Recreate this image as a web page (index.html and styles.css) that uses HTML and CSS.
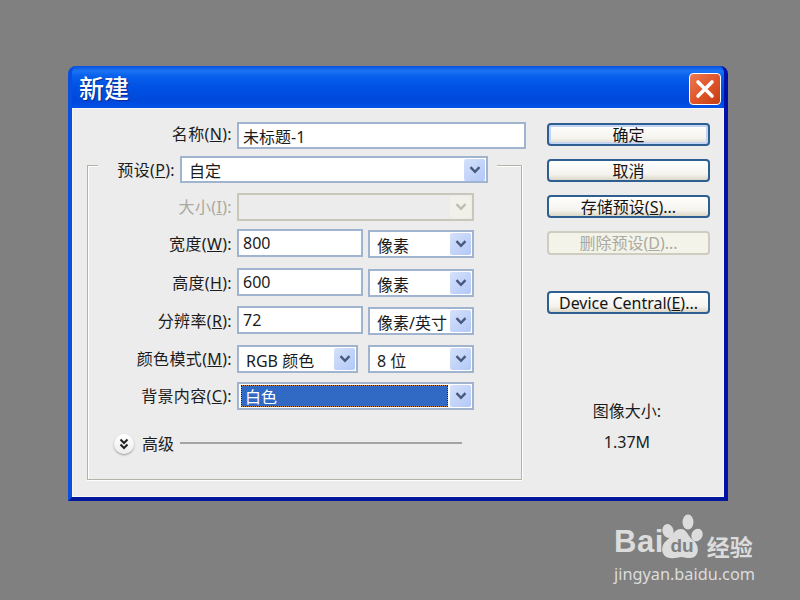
FILE: index.html
```html
<!DOCTYPE html>
<html lang="zh-CN">
<head>
<meta charset="utf-8">
<title>新建</title>
<link rel="stylesheet" href="styles.css">
</head>
<body>
<svg class="defs" width="0" height="0" aria-hidden="true"><defs>
  <symbol id="chev" viewBox="0 0 12 8"><path d="M1.5 1.2 6 5.8l4.5-4.6" fill="none" stroke="currentColor" stroke-width="2.4"/></symbol>
</defs></svg>
<main class="dialog">
  <header class="titlebar">
    <h1 class="title">新建</h1>
    <button class="close" aria-label="关闭"><svg viewBox="0 0 20 20" width="20" height="20"><path d="M3 3l14 14M17 3 3 17" stroke="#fff" stroke-width="3.6" stroke-linecap="round"/></svg></button>
  </header>
  <div class="client">
    <form class="form">
      <div class="row name-row">
        <label class="label">名称(<u>N</u>):</label>
        <div class="field input wide">未标题-1</div>
      </div>
      <div class="preset-row">
        <label class="label">预设(<u>P</u>):</label>
        <div class="field select preset"><span class="val">自定</span><span class="arrow"><svg width="12" height="8"><use href="#chev"/></svg></span></div>
      </div>
      <section class="group">
        <div class="rows">
          <div class="row disabled">
            <label class="label">大小(<u>I</u>):</label>
            <div class="field select full"><span class="val"></span><span class="arrow"><svg width="12" height="8"><use href="#chev"/></svg></span></div>
          </div>
          <div class="row">
            <label class="label">宽度(<u>W</u>):</label>
            <div class="field input num">800</div>
            <div class="field select unit"><span class="val">像素</span><span class="arrow"><svg width="12" height="8"><use href="#chev"/></svg></span></div>
          </div>
          <div class="row">
            <label class="label">高度(<u>H</u>):</label>
            <div class="field input num">600</div>
            <div class="field select unit"><span class="val">像素</span><span class="arrow"><svg width="12" height="8"><use href="#chev"/></svg></span></div>
          </div>
          <div class="row">
            <label class="label">分辨率(<u>R</u>):</label>
            <div class="field input num">72</div>
            <div class="field select unit"><span class="val">像素/英寸</span><span class="arrow"><svg width="12" height="8"><use href="#chev"/></svg></span></div>
          </div>
          <div class="row">
            <label class="label">颜色模式(<u>M</u>):</label>
            <div class="field select mode"><span class="val">RGB 颜色</span><span class="arrow"><svg width="12" height="8"><use href="#chev"/></svg></span></div>
            <div class="field select unit depth"><span class="val">8 位</span><span class="arrow"><svg width="12" height="8"><use href="#chev"/></svg></span></div>
          </div>
          <div class="row">
            <label class="label">背景内容(<u>C</u>):</label>
            <div class="field select full focused"><span class="val">白色</span><span class="arrow"><svg width="12" height="8"><use href="#chev"/></svg></span></div>
          </div>
        </div>
        <div class="advanced">
          <span class="disc"><svg viewBox="0 0 12 12" width="12" height="12"><path d="M2.5 1.5 6 5l3.5-3.5M2.5 6.5 6 10l3.5-3.5" fill="none" stroke="#222" stroke-width="2"/></svg></span>
          <span class="adv-label">高级</span>
          <span class="adv-line"></span>
        </div>
      </section>
    </form>
    <aside class="side">
      <button class="btn default">确定</button>
      <button class="btn">取消</button>
      <button class="btn">存储预设(<u>S</u>)...</button>
      <button class="btn off">删除预设(<u>D</u>)...</button>
      <button class="btn central">Device Central(<u>E</u>)...</button>
      <p class="info info-head">图像大小:</p>
      <p class="info info-size">1.37M</p>
    </aside>
  </div>
</main>
<div class="mark">
  <div class="mark-logo">
    <span class="mark-bai">Bai</span>
    <svg class="mark-paw" viewBox="0 0 46 50" width="46" height="50">
      <ellipse cx="8" cy="17" rx="5.5" ry="7" transform="rotate(-15 8 17)"/>
      <ellipse cx="28" cy="8" rx="5.5" ry="7.5"/>
      <ellipse cx="37" cy="21" rx="5.5" ry="6.5" transform="rotate(25 37 21)"/>
      <path d="M21 15c6 0 7 8 13 12 6 5 5 16-3 17-4 .5-7-1-10-1s-6 2-11 1c-9-1-10-12-4-17 6-4 8-12 15-12z"/>
      <text x="22" y="38" class="mark-du">du</text>
    </svg>
    <span class="mark-jy">经验</span>
  </div>
  <div class="mark-url">jingyan.baidu.com</div>
</div>
</body>
</html>
```
FILE: styles.css
```css
* { box-sizing: border-box; }
html, body { margin: 0; padding: 0; }
body {
  width: 800px;
  height: 600px;
  overflow: hidden;
  position: relative;
  background: #808080;
  padding: 66px 0 0 68px;
  font-family: "Noto Sans", "Noto Sans CJK SC", sans-serif;
  font-size: 16px;
  color: #1c1c1c;
}
.defs { position: absolute; }
u { text-underline-offset: 1px; }

.dialog {
  width: 660px;
  background: #0a52e0;
  border-radius: 8px 8px 0 0;
  border-style: solid;
  border-width: 0 4px 4px 4px;
  border-color: #0a4fe0 #0010a8 #00189c #0a4ee0;
}
.titlebar {
  height: 42px;
  display: flex;
  align-items: flex-start;
  justify-content: space-between;
  padding: 7px 3px 0 7px;
  border-radius: 7px 7px 0 0;
  background: linear-gradient(#0a50dc 0, #1b74f4 5px, #0860ec 10px, #0052e4 21px, #0048dc 35px, #0252e8 42px);
}
.title {
  margin: -2px 0 0;
  color: #fff;
  font-family: "Noto Sans CJK SC", sans-serif;
  font-size: 25px;
  font-weight: 500;
  line-height: 32px;
  text-shadow: 1px 1px 1px #0a2a90;
}
.close {
  width: 32px;
  height: 32px;
  padding: 0;
  display: flex;
  align-items: center;
  justify-content: center;
  border: 1px solid #fff;
  border-radius: 4px;
  background: linear-gradient(135deg, #ec7a50, #e0562a 50%, #c23e14);
}

.client {
  display: flex;
  align-items: flex-start;
  background: #ececec;
  border: 1px solid #f6f6f6;
  padding: 13px 0 16px 14px;
}
.form { width: 439px; display: flex; flex-direction: column; }
.side { width: 163px; margin-left: 21px; display: flex; flex-direction: column; }

.row { display: flex; align-items: flex-start; gap: 5px; height: 28px; }
.label { flex: none; text-align: right; line-height: 29px; white-space: nowrap; letter-spacing: .35px; }
.name-row .label { width: 145px; margin-right: 0; line-height: 25px; }
.preset-row {
  position: relative;
  z-index: 1;
  display: flex;
  align-items: flex-start;
  gap: 5px;
  height: 27px;
  width: 399px;
  margin: 6px 0 -18px 11px;
  padding-right: 9px;
  background: #ececec;
}
.preset-row .label { width: 77px; line-height: 28px; }

.field { flex: none; height: 28px; display: flex; align-items: center; }
.input {
  background: #fff;
  border: 2px solid #a0b4cf;
  padding: 0 4px;
  margin-top: -1px;
}
.wide { width: 289px; height: 27px; margin-top: 0; }
.num { width: 126px; padding-left: 4px; }
.select {
  background: #fff;
  border: 2px solid #a0b4cf;
  justify-content: space-between;
  padding: 1px;
}
.val { flex: 1; padding-left: 6px; padding-top: 1px; white-space: nowrap; overflow: hidden; }
.arrow {
  flex: none;
  width: 21px;
  height: 22px;
  display: flex;
  align-items: center;
  justify-content: center;
  color: #47597e;
  border-radius: 2px;
  background: linear-gradient(135deg, #d5e1fb, #b2c8f7);
}
.preset { width: 308px; height: 27px; }
.full { width: 237px; }
.unit { width: 106px; }
.mode { width: 121px; }
.depth { margin-left: 5px; }

.disabled .label { color: #a9a99f; }
.disabled .select { background: #ececec; border-color: #c9c7ba; }
.disabled .arrow { color: #bdbdb2; background: #f1f1ea; }

.focused .val {
  height: 22px;
  line-height: 23px;
  margin: 0 2px 0 1px;
  padding: 0 0 0 3px;
  background: #316ac5;
  color: #fff;
  border: 1px solid #c98a2a;
  outline: 1px dotted #2a1c00;
  outline-offset: -1px;
}

.group {
  width: 435px;
  margin: 0;
  padding: 27px 0 25px 0;
  border: 1px solid #b5b3a6;
  box-shadow: inset 1px 1px 0 #fff, 0 1px 0 #fff, 1px 0 0 #fff;
}
.rows { display: grid; grid-template-rows: 37px 39px 38px 38px 37px 28px; padding-left: 1px; }
.rows .label { width: 143px; margin-right: 0; }
.advanced {
  display: flex;
  align-items: center;
  height: 20px;
  margin-top: 24px;
  padding-left: 26px;
}
.disc {
  width: 20px;
  height: 20px;
  display: flex;
  align-items: center;
  justify-content: center;
  border-radius: 50%;
  background: linear-gradient(#fff, #ececec);
  box-shadow: 0 1px 2px #8f8f8f;
}
.adv-label { margin-left: 8px; width: 38px; line-height: 20px; }
.adv-line { width: 282px; height: 2px; margin-bottom: 2px; background: #a3a3a3; }

.btn {
  width: 163px;
  height: 23px;
  margin: 0 0 13px;
  padding: 1px 0 0;
  font: inherit;
  line-height: 19px;
  white-space: nowrap;
  color: #141414;
  border: 2px solid #2f5f90;
  border-radius: 4px;
  background: linear-gradient(#fff, #f4f3ee 70%, #dcd8c8);
}
.default {
  margin-top: 1px;
  box-shadow: inset 0 0 0 2px #c3d4f4;
}
.off {
  height: 24px;
  margin-bottom: 36px;
  color: #aaaaa0;
  border-color: #cfcdc0;
  background: #f3f3ea;
}
.central { margin-bottom: 0; }
.info { margin: 0; padding-right: 3px; text-align: center; line-height: 20px; }
.info-head { margin-top: 87px; }
.info-size { margin-top: 11px; }

.mark {
  position: absolute;
  left: 614px;
  top: 514px;
  color: #dcdcdc;
  width: 145px;
}
.mark-logo { display: flex; align-items: flex-end; height: 50px; }
.mark-bai {
  font-family: "Liberation Sans", sans-serif;
  font-weight: 700;
  font-size: 31px;
  line-height: 32px;
  letter-spacing: .5px;
  margin-bottom: 6px;
}
.mark-paw { flex: none; fill: #dcdcdc; margin-left: -4px; }
.mark-du {
  font-family: "Liberation Sans", sans-serif;
  font-size: 19px;
  font-weight: 700;
  text-anchor: middle;
  fill: #808080;
}
.mark-jy {
  font-family: "Noto Sans CJK SC", sans-serif;
  font-weight: 700;
  font-size: 23px;
  line-height: 28px;
  margin: 0 0 4px 1px;
  white-space: nowrap;
}
.mark-url {
  font-family: "Noto Sans", sans-serif;
  font-size: 16.3px;
  line-height: 20px;
  white-space: nowrap;
}
```
